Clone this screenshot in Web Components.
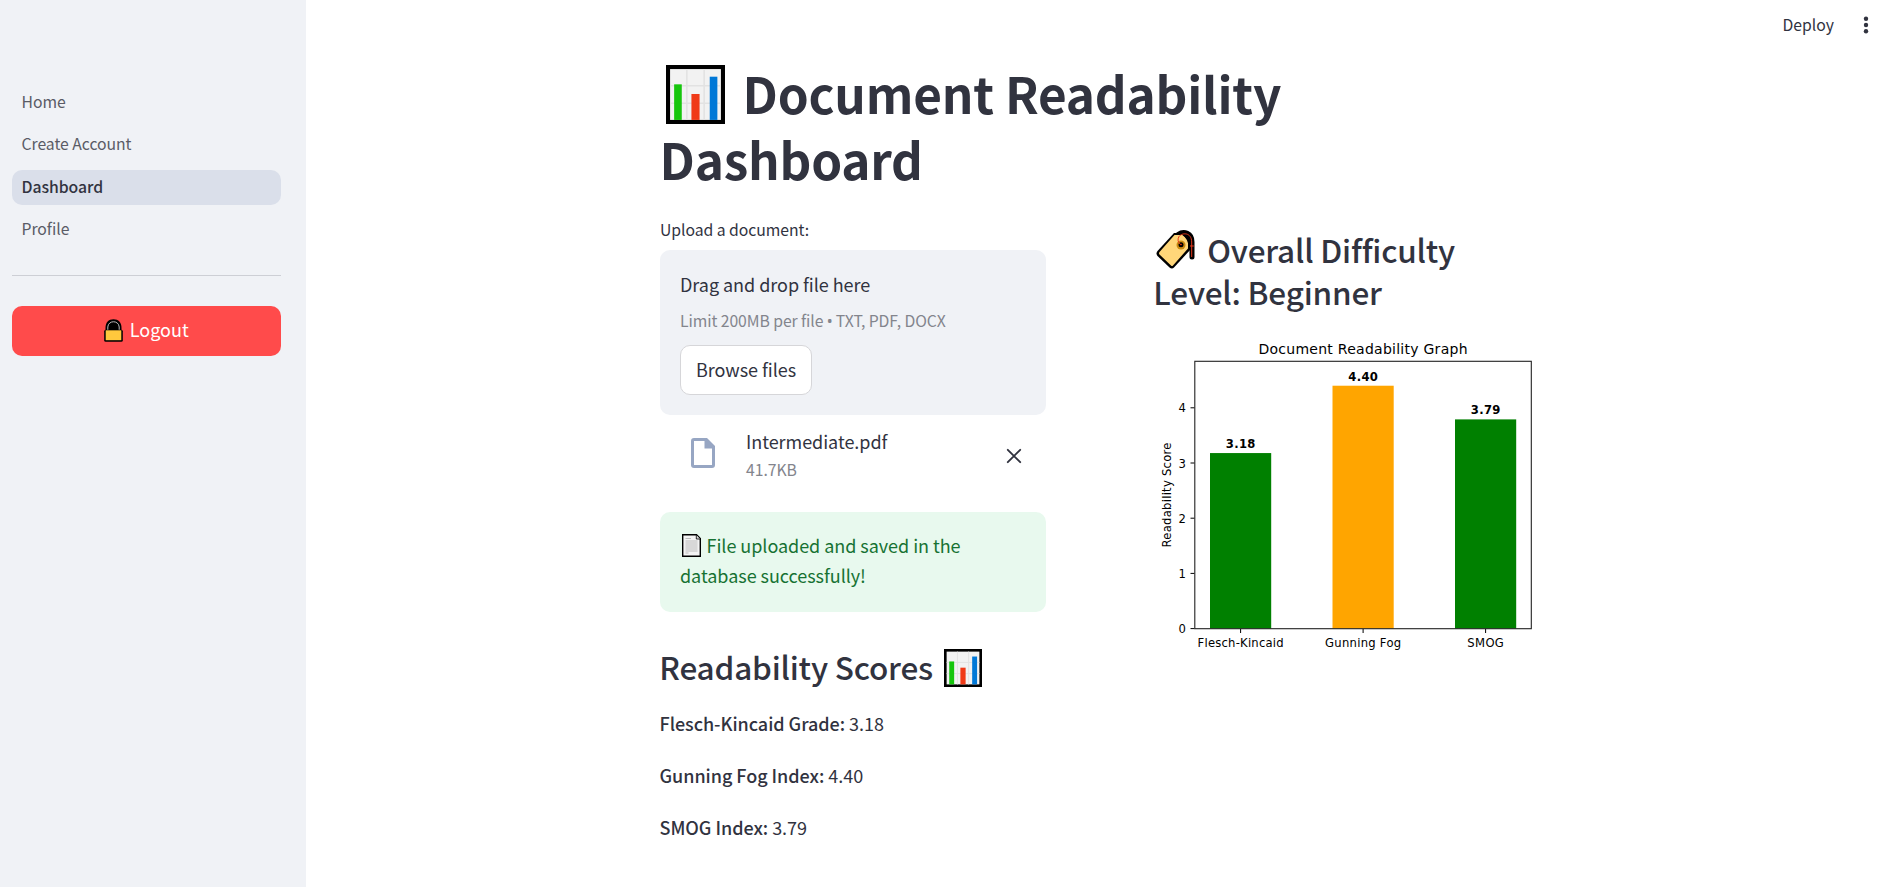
<!DOCTYPE html>
<html lang="en">
<head>
<meta charset="utf-8">
<title>Document Readability Dashboard</title>
<style>
html,body{margin:0;height:100%;background:#fff;overflow:hidden}
body{color:#31333f;font:400 18px/30px "Noto Sans CJK SC","Noto Sans",sans-serif;letter-spacing:-.04px}
</style>
</head>
<body>
<readability-app></readability-app>
<script>
const define=(name,html,init)=>customElements.define(name,class extends HTMLElement{
  constructor(){
    super();
    const t=document.createElement('template');
    t.innerHTML=html;
    this.attachShadow({mode:'open'}).append(t.content.cloneNode(true));
  }
  connectedCallback(){ if(init) init.call(this,this.shadowRoot); }
});

const glyphs={
  chart:`<svg viewBox="0 0 58 58" preserveAspectRatio="none"><rect width="58" height="58" fill="#000"/><rect x="4" y="4" width="50" height="50" fill="#f2f2f2"/><path d="M4 20.500H54M4 37.500H54M20.500 4V54M37.500 4V54" stroke="#e2e2e2" stroke-width="1.500"/><rect x="8" y="19" width="7.500" height="35" fill="#16c60c"/><rect x="25" y="28.500" width="8" height="25.500" fill="#f03a17"/><rect x="43" y="11.500" width="7.500" height="42.500" fill="#0078d7"/></svg>`,
  tag:`<svg viewBox="0 0 40 40"><path d="M22 4.500C28 .5 36 3 36 12V27" fill="none" stroke="#000" stroke-width="5" stroke-linecap="round"/><path d="M18 3H30L35 9V19L18 37.500Q16 39.500 13.500 37.500L1.500 26Q-.5 23.500 1.500 21Z" fill="#000"/><path d="M18.500 5H27L32 10V18.500L17 35.500Q16 36.500 15 35.500L3.500 24.500Q2.500 23.500 3.500 22Z" fill="#ffd679"/><path d="M25 4Q35 3 35.500 18H32.500Q33 9 25 4Z" fill="#000"/><circle cx="25" cy="15" r="4.500" fill="#c98a12"/><circle cx="25" cy="14.700" r="2.500" fill="#000"/><path d="M24.500 14.500Q20.500 11 23 6.500C26 2.500 35.500 2 35.700 12V27M34 16H37.800" fill="none" stroke="#e8381a" stroke-width="1"/><circle cx="25" cy="14.500" r=".8" fill="#f03a17"/></svg>`,
  lock:`<svg viewBox="0 0 19 23"><path d="M1.500 12V9C1.500 3 4.500 .2 9.500.2S17.500 3 17.500 9V12Z" fill="#000"/><path d="M3.800 11V8C4.200 1 14.800 1 15.200 8V11" fill="none" stroke="#bbb" stroke-width="1"/><rect x=".2" y="10.700" width="18.600" height="12" rx="1.500" fill="#000"/><rect x="1.700" y="11.300" width="15.600" height="9.900" fill="#ffc83d"/></svg>`,
  page:`<svg viewBox="0 0 19 23"><path d="M.7.700H14.500L18.300 4.500V22.300H.7Z" fill="#f4f4f4" stroke="#000" stroke-width="1.400"/><path d="M14.300 1V5H18" fill="#ddd" stroke="#000" stroke-width=".8"/><path d="M3.500 4.500H9M3.500 7H15.500M3.500 9H15.500M3.500 11H15.500M3.500 13H15.500M3.500 15H15.500M3.500 17H15.500M3.500 19H6.500" stroke="#b5b5b5" stroke-width=".9"/></svg>`
};
define('emoji-icon',`<style>:host{display:inline-block;line-height:0}svg{display:block;width:100%;height:100%}#g{display:block;width:100%;height:100%}</style><span id="g"></span>`,
  function(r){ r.getElementById('g').innerHTML=glyphs[this.getAttribute('name')]; });

define('nav-item',`<style>
:host{display:block;height:35px;border-radius:10px;padding:0 9.500px;font-size:15.750px;line-height:33px;color:#5a5c66}
:host([active]){background:#dadfea;color:#31333f;font-weight:500}
</style><slot></slot>`);

define('side-bar',`<style>
:host{display:block;width:306px;flex:none;background:#f0f2f6;box-sizing:border-box;padding:84.800px 25px 0 12px}
nav{display:grid;gap:7.500px}
hr{border:0;height:1px;background:#cdcfd5;margin:27.700px 0 30px}
button{display:flex;align-items:center;justify-content:center;width:100%;height:50px;border:0;border-radius:10px;background:#ff4b4b;color:#fff;font:inherit;padding:0}
.t{line-height:46px;height:50px}
emoji-icon{width:19px;height:23px;margin:0 6.500px 0 0}
</style>
<nav><nav-item>Home</nav-item><nav-item>Create Account</nav-item><nav-item active>Dashboard</nav-item><nav-item>Profile</nav-item></nav>
<hr><button><emoji-icon name="lock"></emoji-icon><span class="t">Logout</span></button>`);

define('top-bar',`<style>
:host{display:flex;justify-content:flex-end;align-items:center;height:50px;padding-right:22.700px;gap:29.500px;font-size:15.750px;line-height:48px}
svg{display:block;width:6px;height:18px}
</style><span>Deploy</span><svg viewBox="0 0 6 18" fill="#31333f"><circle cx="3" cy="2.700" r="2.200"/><circle cx="3" cy="9" r="2.200"/><circle cx="3" cy="15.300" r="2.200"/></svg>`);

define('file-uploader',`<style>
:host{display:block}
label{display:block;font-size:15.750px;line-height:28px;height:34px;padding-top:1px}
.drop{background:#f0f2f6;border-radius:10px;height:165px;box-sizing:border-box;padding:19px 20px 0}
.limit{font-size:15.750px;line-height:24px;margin:10px 0 12px;color:#83858d;white-space:nowrap;letter-spacing:-.08px}
.dot{display:inline-block;width:12.500px;text-align:center;font-family:"Noto Sans";line-height:20px}
button{display:block;font:inherit;color:inherit;letter-spacing:inherit;width:132px;height:50px;line-height:30px;padding:0 0 3px;background:#fff;border:1px solid #d6d6d9;border-radius:10px}
.file{display:flex;height:86px;margin-top:11px;padding:0 24.500px 0 30px}
.file svg{display:block;flex:none}
.doc{margin:12px 30px 0 0}
.meta{flex:1}.size{font-size:15.750px;line-height:24px;margin-top:2px;color:#83858d}
.x{margin-top:21.500px}
</style>
<label>Upload a document:</label>
<div class="drop"><div>Drag and drop file here</div>
<div class="limit">Limit 200MB per file<span class="dot">•</span>TXT, PDF, DOCX</div>
<button>Browse files</button></div>
<div class="file">
<svg class="doc" width="26" height="30" viewBox="0 0 26 30"><path fill="#97a6c3" fill-rule="evenodd" d="M4 0H17L25 8V27Q25 30 22 30H4Q1 30 1 27V3Q1 0 4 0ZM4 3V27H22V10.500H14.500V3Z"/></svg>
<div class="meta"><div>Intermediate.pdf</div><div class="size">41.7KB</div></div>
<svg class="x" width="16" height="16" viewBox="0 0 16 16"><path d="M1.800 1.800L14.200 14.200M14.200 1.800L1.800 14.200" stroke="#31333f" stroke-width="1.900" stroke-linecap="round"/></svg>
</div>`);

define('success-alert',`<style>
:host{display:block;height:100px;box-sizing:border-box;padding:18px 20px 0;border-radius:10px;background:#e8f9ee;color:#177233}
emoji-icon{width:19px;height:23px;vertical-align:-4px;margin:0 6px 0 1.500px}
</style><emoji-icon name="page"></emoji-icon><slot></slot>`);

define('section-title',`<style>
:host{display:block;font-size:31.500px;line-height:42px;font-weight:500;white-space:nowrap;letter-spacing:-.2px}
</style><slot></slot>`);

define('score-row',`<style>
:host{display:block;height:30px;white-space:nowrap}
b{font-weight:500}
</style><b><slot name="label"></slot></b> <slot></slot>`);

define('score-chart',`<style>
:host{display:block;width:386px;height:330px;letter-spacing:0}
svg{display:block;font-family:"DejaVu Sans",sans-serif;fill:#000}
.s{font-size:11.600px}
</style><svg width="386" height="330" viewBox="1154 335 386 330"></svg>`,function(r){
  const base=628.6,unit=55.2;
  let s=`<text x="1363" y="354" text-anchor="middle" font-size="14" textLength="209">Document Readability Graph</text>`;
  for(const [x,v,n,c,w] of [[1210,3.18,'Flesch-Kincaid','#008000',86],[1332.5,4.40,'Gunning Fog','#ffa500',76],[1455,3.79,'SMOG','#008000',36.500]]){
    const top=base-v*unit,m=x+30.6;
    s+=`<rect x="${x}" y="${top}" width="61.200" height="${base-top}" fill="${c}"/>
    <text class="s" font-weight="bold" x="${m}" y="${top-5}" text-anchor="middle" textLength="29.500">${v.toFixed(2)}</text>
    <text class="s" x="${m}" y="646.700" text-anchor="middle" textLength="${w}">${n}</text>
    <path d="M${m} 629V633" stroke="#000" stroke-width="1"/>`;
  }
  for(let i=0;i<5;i++){const y=base-i*unit;
    s+=`<path d="M1190.500 ${y}H1194.500" stroke="#000" stroke-width="1"/><text class="s" x="1186" y="${y+4.5}" text-anchor="end">${i}</text>`;}
  s+=`<rect x="1194.800" y="361.300" width="336.500" height="267.400" fill="none" stroke="#222" stroke-width="1.100"/>
  <text class="s" transform="translate(1171 495)rotate(-90)" text-anchor="middle" textLength="105">Readability Score</text>`;
  r.querySelector('svg').innerHTML=s;
});

define('readability-app',`<style>
:host{display:flex;height:887px;width:1892px}
main{flex:1;display:flex;flex-direction:column}
.page{width:880px;margin:10px 0 0 353.500px}
h1{margin:0;font-size:49.500px;line-height:66px;font-weight:700;letter-spacing:-.2px}
h1 emoji-icon{width:59px;height:59px;vertical-align:-10px;margin:0 17.500px 0 6.500px}
.cols{display:grid;grid-template-columns:386px 386px;column-gap:108px;padding-left:.5px}
.left{padding-top:23px}.right{padding-top:36px}
section-title{margin-left:-.7px}
section-title emoji-icon{width:38px;height:38px;vertical-align:-7px;margin-left:11px}
.right emoji-icon{width:40px;height:40px;margin:0 11px 0 3px}
.scores{display:grid;gap:22px;margin:21px 0 0 -.5px}
.left section-title{margin-top:33px}
score-chart{margin-top:23px}
</style>
<side-bar></side-bar>
<main><top-bar></top-bar>
<div class="page"><h1><emoji-icon name="chart"></emoji-icon>Document Readability<br>Dashboard</h1>
<div class="cols"><div class="left">
<file-uploader></file-uploader>
<success-alert>File uploaded and saved in the database successfully!</success-alert>
<section-title>Readability Scores<emoji-icon name="chart"></emoji-icon></section-title>
<div class="scores">
<score-row><span slot="label">Flesch-Kincaid Grade:</span>3.18</score-row>
<score-row><span slot="label">Gunning Fog Index:</span>4.40</score-row>
<score-row><span slot="label">SMOG Index:</span>3.79</score-row>
</div></div>
<div class="right">
<section-title><emoji-icon name="tag"></emoji-icon>Overall Difficulty<br>Level: Beginner</section-title>
<score-chart></score-chart>
</div></div></div></main>`);
</script>
</body>
</html>
